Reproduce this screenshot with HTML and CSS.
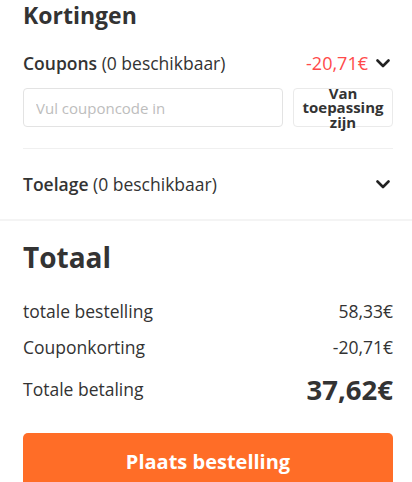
FILE: index.html
```html
<!DOCTYPE html>
<html lang="nl">
<head>
<meta charset="utf-8">
<link rel="stylesheet" href="styles.css">
</head>
<body>
<section class="discounts">
  <h2 class="title">Kortingen</h2>
  <div class="row coupon-row">
    <span class="label"><b>Coupons</b> (0 beschikbaar)</span>
    <span class="right"><span class="red">-20,71€</span>
      <svg class="chev" width="14" height="9" viewBox="0 0 14 9"><path d="M1.5 1.5 L7 7 L12.5 1.5" fill="none" stroke="#222" stroke-width="2.6" stroke-linecap="round" stroke-linejoin="round"/></svg>
    </span>
  </div>
  <div class="coupon-form">
    <input class="coupon-input" type="text" placeholder="Vul couponcode in">
    <button class="apply">Van toepassing zijn</button>
  </div>
  <div class="row allow-row">
    <span class="label"><b>Toelage</b> (0 beschikbaar)</span>
    <svg class="chev" width="14" height="9" viewBox="0 0 14 9"><path d="M1.5 1.5 L7 7 L12.5 1.5" fill="none" stroke="#222" stroke-width="2.6" stroke-linecap="round" stroke-linejoin="round"/></svg>
  </div>
</section>
<section class="total">
  <h2 class="big">Totaal</h2>
  <div class="line first"><span>totale bestelling</span><span>58,33€</span></div>
  <div class="line"><span>Couponkorting</span><span>-20,71€</span></div>
  <div class="line pay"><span>Totale betaling</span><span class="amount">37,62€</span></div>
  <button class="order">Plaats bestelling</button>
</section>
</body>
</html>
```
FILE: styles.css
```css
* { box-sizing: border-box; }
body {
  margin: 0;
  font-family: "Open Sans", sans-serif;
  color: #333;
  background: #fff;
  width: 412px;
  height: 482px;
  overflow: hidden;
}
.discounts {
  padding: 0 19px 0 23px;
  border-bottom: 2px solid #f4f4f4;
}
.title {
  margin: 0;
  font-size: 23px;
  font-weight: 700;
  line-height: 30px;
}
.row {
  display: flex;
  justify-content: space-between;
  align-items: center;
  font-size: 17.5px;
}
.label b { font-weight: 600; }
.coupon-row { height: 34px; margin-top: 16px; }
.right { display: flex; align-items: center; gap: 8px; }
.red { color: #ff4a4a; font-size: 18px; }
.chev { display: block; margin-right: 3px; }
.coupon-form {
  display: flex;
  gap: 10px;
  margin-top: 8px;
  padding-bottom: 21px;
  border-bottom: 1px solid #f0f0f0;
}
.coupon-input {
  width: 260px;
  height: 39px;
  border: 1px solid #e3e3e3;
  border-radius: 4px;
  padding: 0 12px;
  font-family: "Open Sans", sans-serif;
  font-size: 15px;
  color: #333;
  outline: none;
}
.coupon-input::placeholder { color: #bdbdbd; }
.apply {
  width: 100px;
  height: 39px;
  border: 1px solid #eaeaea;
  border-radius: 4px;
  background: #fff;
  font-family: "Open Sans", sans-serif;
  font-size: 15px;
  font-weight: 700;
  line-height: 14.5px;
  color: #333;
  padding: 0 2px;
  display: flex;
  align-items: center;
  justify-content: center;
}
.allow-row { height: 70px; }
.total { padding: 0 19px 0 23px; }
.big {
  margin: 17px 0 0;
  font-size: 28px;
  font-weight: 700;
  line-height: 38px;
}
.line {
  display: flex;
  justify-content: space-between;
  align-items: center;
  font-size: 17.5px;
  height: 36px;
}
.line.first { margin-top: 17px; }
.pay { height: 48px; }
.amount { font-size: 27.5px; font-weight: 700; }
.order {
  display: block;
  width: 100%;
  height: 56px;
  margin-top: 20px;
  border: none;
  border-radius: 5px;
  background: #ff6d27;
  color: #fff;
  font-family: "Open Sans", sans-serif;
  font-size: 20px;
  font-weight: 700;
}
```
